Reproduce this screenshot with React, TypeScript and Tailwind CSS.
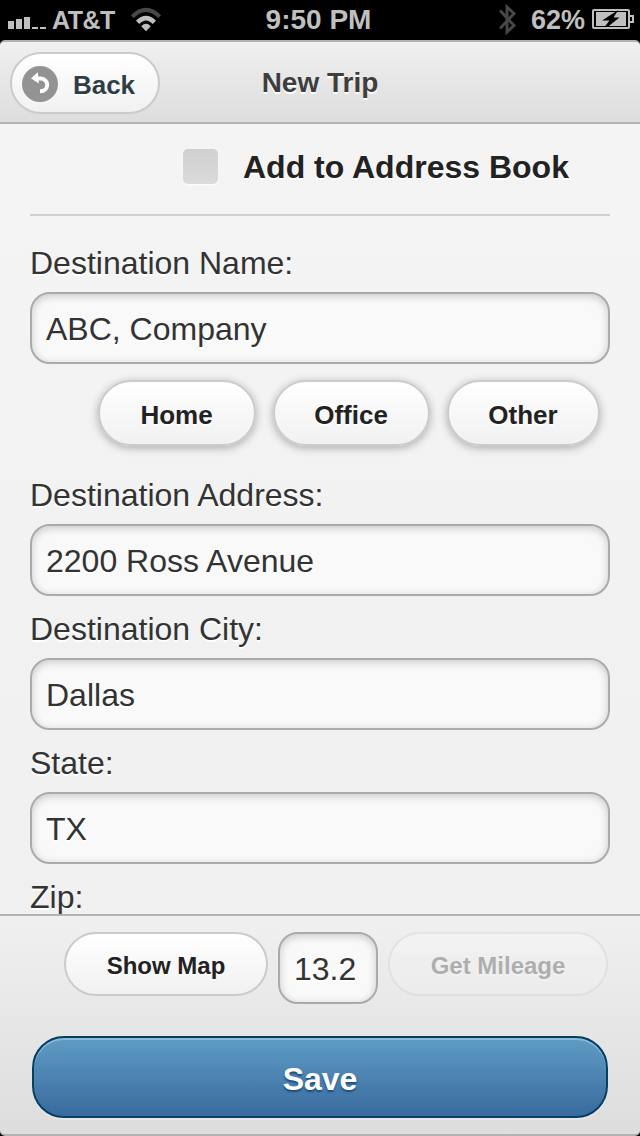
import type { ReactNode } from "react";

const pill =
  "flex items-center justify-center rounded-full border-2 border-[#cbcbcb] bg-linear-to-b from-white to-[#f1f1f1] font-bold text-[#222] [text-shadow:0_2px_0_#fff]";

const inset =
  "flex items-center rounded-[20px] border-2 border-[#aaa] bg-[#f9f9f9] text-[32px] text-[#333] shadow-[inset_0_2px_8px_rgba(0,0,0,0.2)] [text-shadow:0_2px_0_#fff]";

function Label({ children }: { children: ReactNode }) {
  return (
    <div className="h-10 text-[32px] leading-10 whitespace-nowrap text-[#333] [text-shadow:0_2px_0_#fff]">
      {children}
    </div>
  );
}

function Field({ label, value }: { label: string; value: string }) {
  return (
    <div className="flex flex-col gap-[9px]">
      <Label>{label}</Label>
      <div className={`${inset} h-[72px] px-3.5 pt-0.5`}>{value}</div>
    </div>
  );
}

function StatusBar() {
  return (
    <div className="flex h-10 shrink-0 items-center bg-black font-bold text-[#bfbfbf]">
      <div className="flex w-[213px] items-center pl-2">
        <svg width="38" height="40" fill="#bfbfbf">
          <path d="M0 21h6v8H0zM8 19h6v10H8zM16 17h6v12h-6zM24 27h6v2h-6zM32 27h6v2h-6z" />
        </svg>
        <span className="ml-1.5 w-16 text-[25px] leading-10 tracking-[-0.5px]">AT&amp;T</span>
        <svg className="ml-3.5" width="32" height="40" fill="none" strokeWidth="4">
          <path d="M2.3 16.6Q16 3.2 29.7 16.6" stroke="#484848" />
          <path d="M7.6 22.4Q16 13.8 24.4 22.4" stroke="#bfbfbf" strokeWidth="4.6" />
          <path d="M11.2 26.2Q16 21.4 20.8 26.2L16 31.2Z" fill="#bfbfbf" />
        </svg>
      </div>
      <div className="w-[211px] text-center text-[28px] leading-[38px]">9:50 PM</div>
      <div className="flex flex-1 items-center justify-end pr-[5px]">
        <svg width="18" height="40" fill="none" stroke="#484848" strokeWidth="2.9">
          <path d="M1 10.5L15 25.5L8 32V7L15 13.5L1 28.5" />
        </svg>
        <span className="ml-3.5 w-[54px] text-[27px] leading-10 whitespace-nowrap">62%</span>
        <svg className="ml-[7px]" width="43" height="40">
          <rect x="1" y="10" width="36" height="18" rx="1" fill="none" stroke="#bfbfbf" strokeWidth="2" />
          <path d="M38 16h3v6h-3" fill="none" stroke="#bfbfbf" strokeWidth="2" />
          <rect x="4" y="12" width="30" height="14" fill="#bfbfbf" />
          <path d="M25.5 10.5L10 20.5H17.5L12.5 27H15.5L27.5 17.5H21.5L26 10.5Z" fill="#000" />
        </svg>
      </div>
    </div>
  );
}

function Header() {
  return (
    <header className="flex h-[84px] shrink-0 items-center rounded-t-[5px] border-y-2 border-[#b3b3b3] bg-linear-to-b from-[#f0f0f0] to-[#ddd] pl-2.5">
      <div className={`${pill} mt-0.5 h-[62px] w-[150px] gap-[15px] pr-[13px]`}>
        <svg className="mt-0.5" width="36" height="36" viewBox="0 0 36 36">
          <circle cx="18" cy="18" r="18" fill="#939393" />
          <path
            d="M12 12.6H18.5C27.5 12.6 27.5 25.3 18 25.3"
            fill="none"
            stroke="#fff"
            strokeWidth="4"
          />
          <path d="M9 12.2L15.8 6.2L16.8 17.6Z" fill="#fff" />
        </svg>
        <span className="pt-[3px] text-[26px] leading-8 text-[#2f3e46]">Back</span>
      </div>
      <h1 className="mt-0.5 ml-[60px] w-[200px] text-center text-[28px] leading-8 font-bold text-[#3e3e3e] [text-shadow:0_2px_0_#fff]">
        New Trip
      </h1>
    </header>
  );
}

export default function App() {
  return (
    <div className="h-[1136px] w-[640px] overflow-hidden bg-black font-['Liberation_Sans',Arial,sans-serif]">
      <div className="flex h-full flex-col">
        <StatusBar />
        <Header />
        <main className="h-[790px] shrink-0 overflow-hidden bg-linear-to-b from-[#f4f4f4] to-[#f0f0f0] px-[30px]">
          <div className="flex h-[92px] items-start border-b-2 border-[#d1d1d1] pl-[153px]">
            <div className="mt-[25px] size-[35px] rounded-[5px] bg-linear-to-b from-[#d0d0d0] to-[#dbdbdb] shadow-[0_1px_2px_#fff]" />
            <span className="mt-[23px] ml-[25px] text-[32px] leading-10 font-bold whitespace-nowrap text-[#222] [text-shadow:0_2px_0_#fff]">
              Add to Address Book
            </span>
          </div>
          <div className="pt-[27px]">
            <Field label="Destination Name:" value="ABC, Company" />
          </div>
          <div className="mt-4 flex justify-end gap-[17px] pr-2.5 text-[26px]">
            <div className={`${pill} h-[66px] w-[158px] pt-1 pr-px shadow-[0_2px_8px_rgba(0,0,0,0.3)]`}>Home</div>
            <div className={`${pill} h-[66px] w-[157px] pt-1 pr-px shadow-[0_2px_8px_rgba(0,0,0,0.3)]`}>Office</div>
            <div className={`${pill} h-[66px] w-[153px] pt-1 pr-px shadow-[0_2px_8px_rgba(0,0,0,0.3)]`}>Other</div>
          </div>
          <div className="mt-[29px] flex flex-col gap-[13px]">
            <Field label="Destination Address:" value="2200 Ross Avenue" />
            <Field label="Destination City:" value="Dallas" />
            <Field label="State:" value="TX" />
            <Label>Zip:</Label>
          </div>
        </main>
        <footer className="h-[222px] shrink-0 rounded-b-[5px] border-y-2 border-[#b3b3b3] bg-linear-to-b from-[#f0f0f0] to-[#ddd] px-8 pt-4">
          <div className="flex items-start justify-end gap-2.5 text-2xl">
            <div className={`${pill} h-16 w-[204px] pt-1`}>Show Map</div>
            <div className={`${inset} h-[72px] w-[100px] pt-0.5 pl-3.5`}>13.2</div>
            <div className={`${pill} h-16 w-[220px] pt-1 opacity-30`}>Get Mileage</div>
          </div>
          <div className="mt-8 flex h-[82px] items-center justify-center rounded-[32px] border-2 border-[#044062] bg-linear-to-b from-[#5f9cc5] to-[#396b9e] pt-1 text-[32px] font-bold text-white shadow-[inset_0_2px_0_rgba(255,255,255,0.3),0_2px_0_rgba(255,255,255,0.3)] [text-shadow:0_2px_2px_#194b7e]">
            Save
          </div>
        </footer>
      </div>
    </div>
  );
}
